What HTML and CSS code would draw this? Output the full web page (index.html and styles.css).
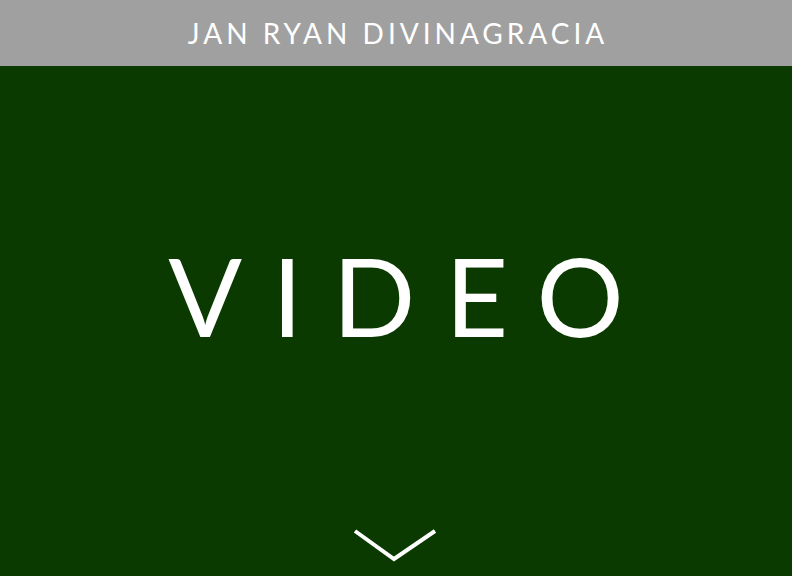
FILE: index.html
```html
<!DOCTYPE html>
<html>
<head>
<meta charset="utf-8">
<link rel="stylesheet" href="styles.css">
</head>
<body>
<header class="topbar">
  <span class="brand">JAN RYAN DIVINAGRACIA</span>
</header>
<section class="hero">
  <h1 class="title">VIDEO</h1>
  <svg class="chevron" width="86" height="36" viewBox="0 0 86 36">
    <polyline points="2,3 41,31 82,3" fill="none" stroke="#ffffff" stroke-width="4"/>
  </svg>
</section>
</body>
</html>
```
FILE: styles.css
```css
html, body {
  margin: 0;
  padding: 0;
}
body {
  width: 792px;
  height: 576px;
  overflow: hidden;
  background: #0b3a00;
  font-family: "Lato", "Liberation Sans", sans-serif;
}
.topbar {
  height: 66px;
  background: #a0a0a0;
  display: flex;
  align-items: center;
  justify-content: center;
}
.brand {
  color: #ffffff;
  font-size: 28px;
  font-weight: 400;
  letter-spacing: 4px;
  padding-left: 4px;
  line-height: 1;
}
.hero {
  height: 510px;
  display: flex;
  flex-direction: column;
  align-items: center;
}
.title {
  margin: 174px 0 0 0;
  color: #ffffff;
  font-size: 109px;
  font-weight: 400;
  line-height: 1;
  letter-spacing: 30px;
  padding-left: 30px;
}
.chevron {
  margin-top: auto;
  margin-bottom: 12px;
}
```
